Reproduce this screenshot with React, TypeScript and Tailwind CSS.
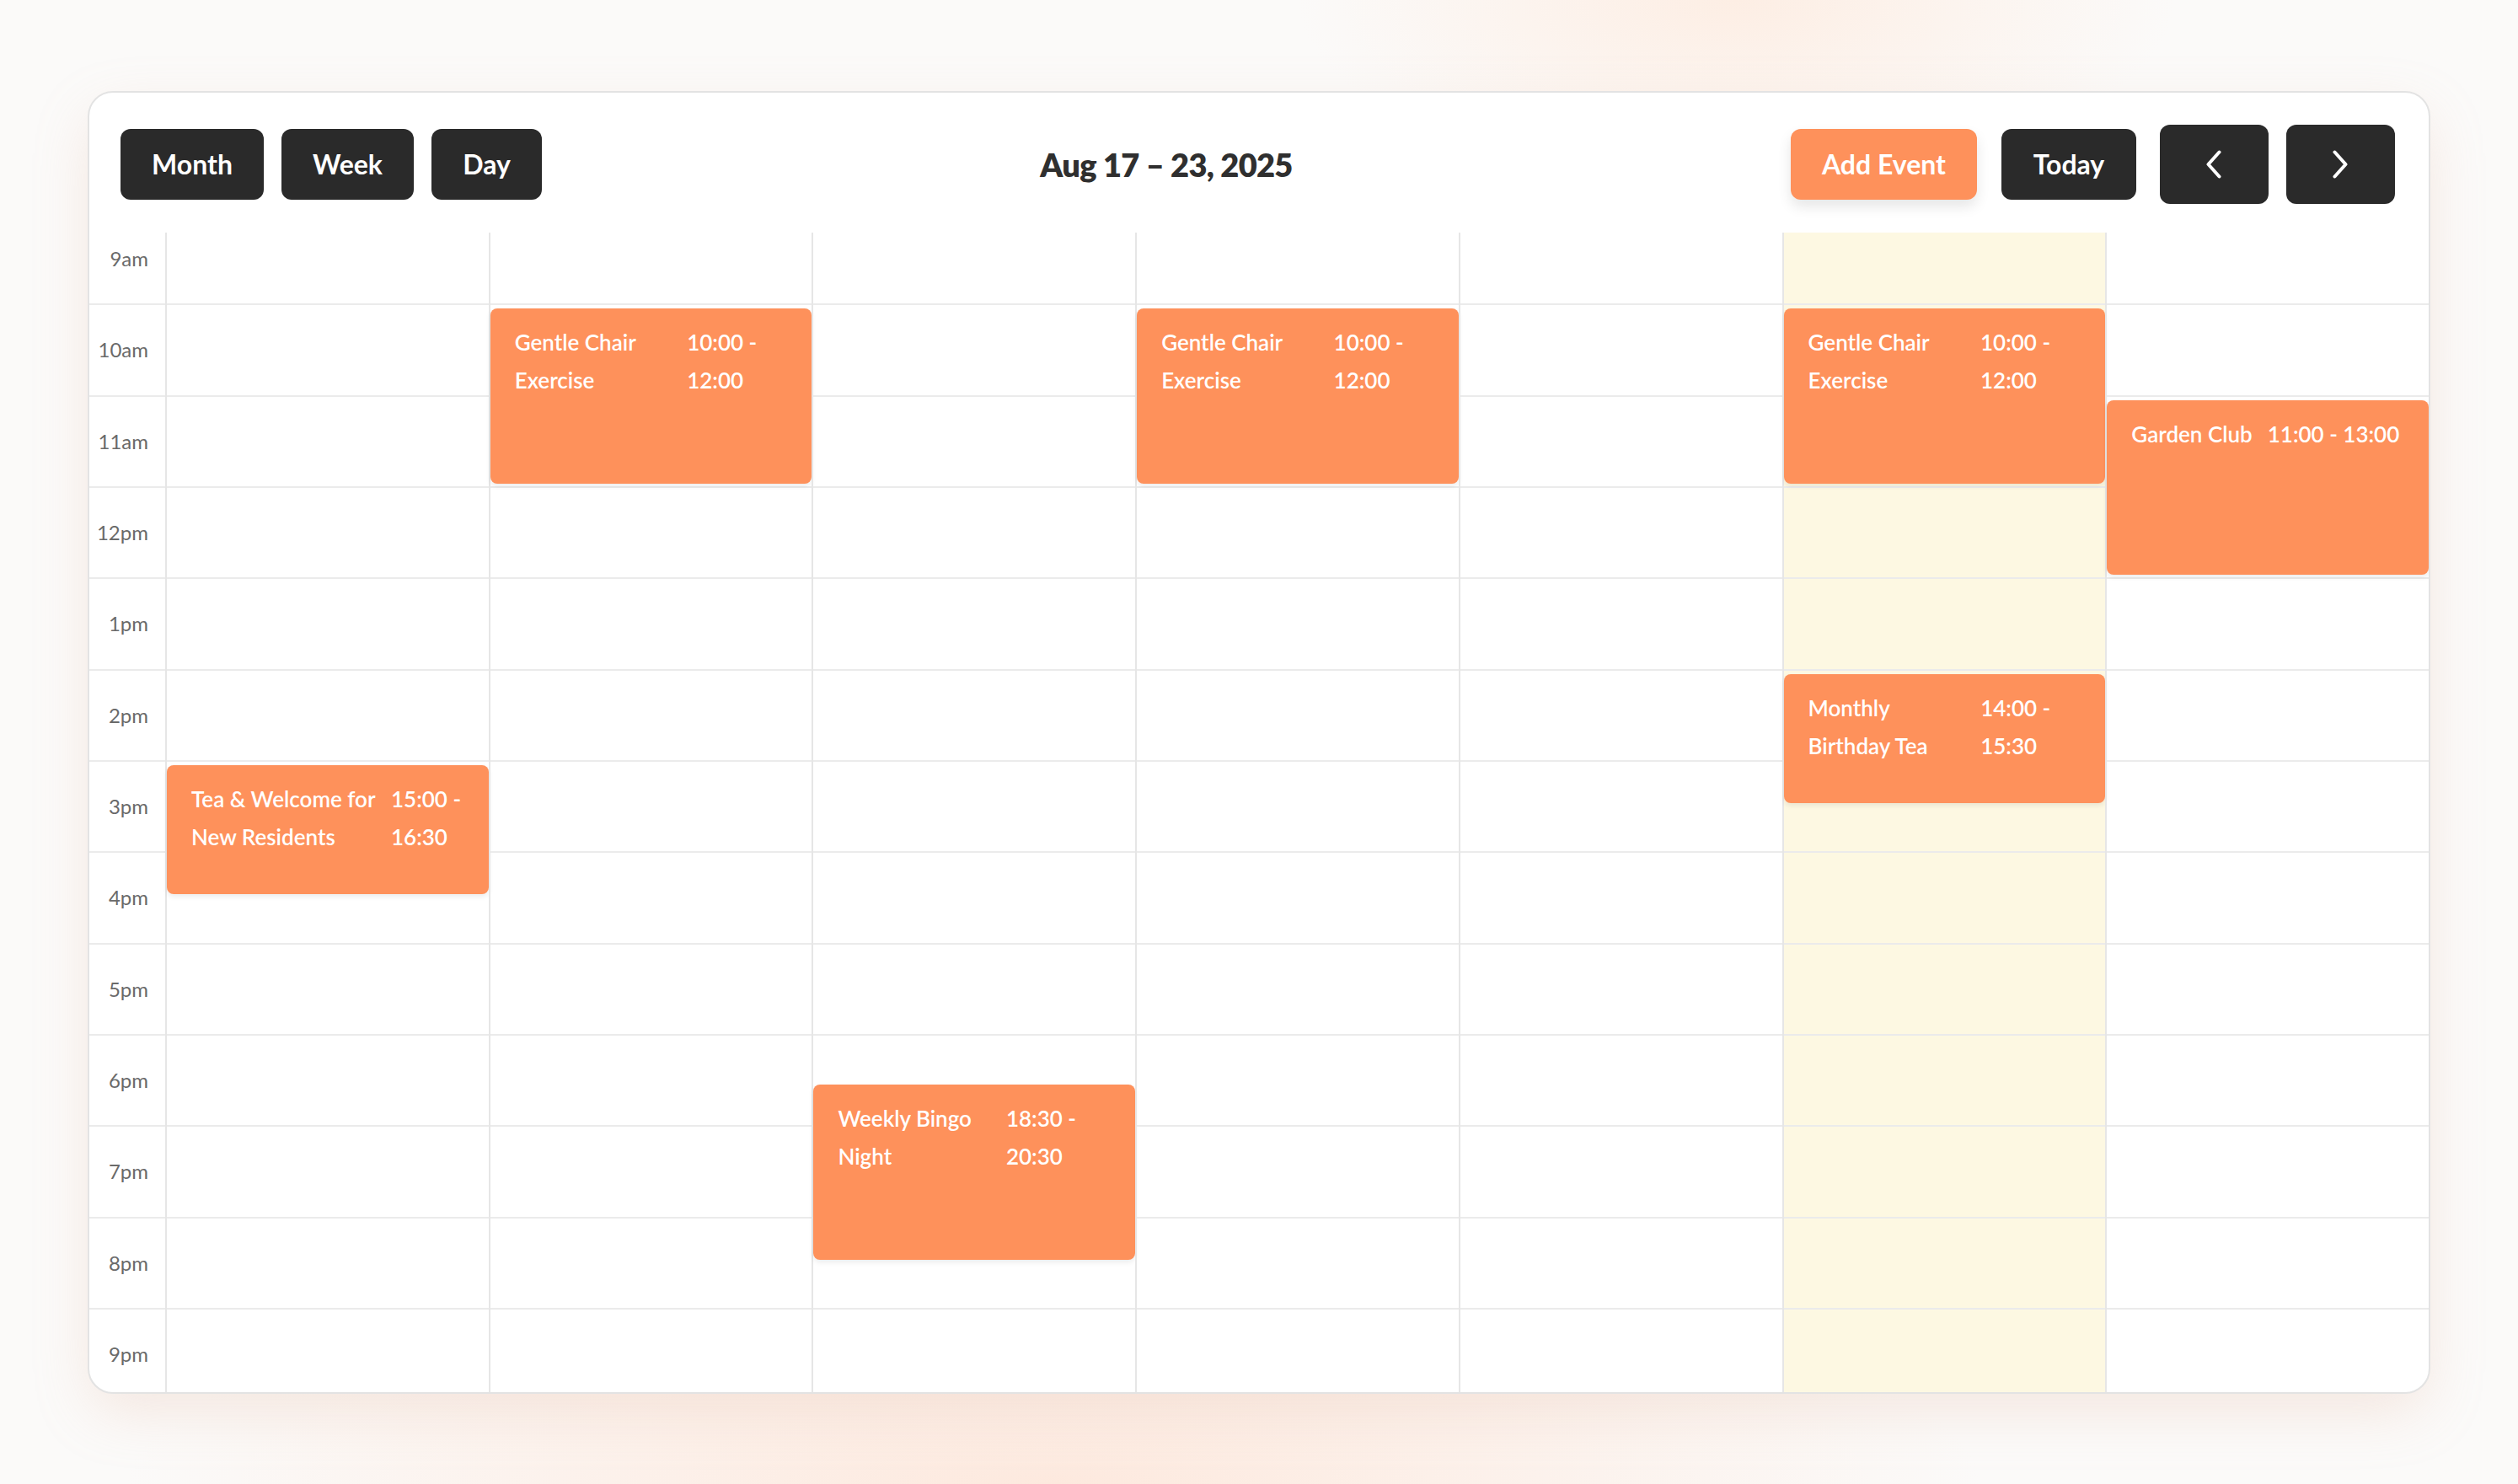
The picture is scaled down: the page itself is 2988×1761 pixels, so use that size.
import React from 'react';

const HOURS = ['9am', '10am', '11am', '12pm', '1pm', '2pm', '3pm', '4pm', '5pm', '6pm', '7pm', '8pm', '9pm'];
const ROW = 108.33;

type Ev = { day: number; start: number; end: number; title: string; time: string };

const EVENTS: Ev[] = [
  { day: 0, start: 15, end: 16.5, title: 'Tea & Welcome for New Residents', time: '15:00 - 16:30' },
  { day: 1, start: 10, end: 12, title: 'Gentle Chair Exercise', time: '10:00 - 12:00' },
  { day: 2, start: 18.5, end: 20.5, title: 'Weekly Bingo Night', time: '18:30 - 20:30' },
  { day: 3, start: 10, end: 12, title: 'Gentle Chair Exercise', time: '10:00 - 12:00' },
  { day: 5, start: 10, end: 12, title: 'Gentle Chair Exercise', time: '10:00 - 12:00' },
  { day: 5, start: 14, end: 15.5, title: 'Monthly Birthday Tea', time: '14:00 - 15:30' },
  { day: 6, start: 11, end: 13, title: 'Garden Club', time: '11:00 - 13:00' },
];

function Chevron({ dir }: { dir: 'left' | 'right' }) {
  return (
    <svg width="20" height="34" viewBox="0 0 20 34" fill="none" stroke="white" strokeWidth="4" strokeLinecap="round" strokeLinejoin="round">
      <polyline points={dir === 'left' ? '16.5,2.5 3.5,17 16.5,31.5' : '3.5,2.5 16.5,17 3.5,31.5'} />
    </svg>
  );
}

export default function App() {
  const days = [0, 1, 2, 3, 4, 5, 6];
  return (
    <div className="w-full h-[1761px] bg-[#fbfaf9] bg-[radial-gradient(ellipse_520px_220px_at_2060px_0px,#fdeee4,transparent),radial-gradient(ellipse_1100px_260px_at_1250px_1761px,#fde9de,transparent)] px-[104px] pt-[108px] pb-[107px] [font-family:Lato,'Noto_Sans',sans-serif]">
      <div className="h-full flex flex-col bg-white border-2 border-[#e3e3e3] rounded-[30px] overflow-hidden shadow-[0_24px_70px_-8px_rgba(225,175,150,0.28)]">
        <header className="flex items-center justify-between pl-[37px] pr-[40px] pt-[38px] pb-[34px]">
          <div className="flex items-center gap-[21px]">
            <button className="w-[170px] h-[84px] rounded-[12px] bg-[#2a2a2a] text-white text-[32px] font-bold">Month</button>
            <button className="w-[157px] h-[84px] rounded-[12px] bg-[#2a2a2a] text-white text-[32px] font-bold">Week</button>
            <button className="w-[131px] h-[84px] rounded-[12px] bg-[#2a2a2a] text-white text-[32px] font-bold">Day</button>
          </div>
          <h1 className="text-[38px] font-extrabold text-[#2f2f2f] tracking-[-0.7px]">Aug 17 – 23, 2025</h1>
          <div className="flex items-center">
            <button className="w-[221px] h-[84px] rounded-[12px] bg-[#fe915b] text-white text-[32px] font-bold shadow-[0_8px_16px_rgba(0,0,0,0.10)]">Add Event</button>
            <button className="ml-[29px] w-[160px] h-[84px] rounded-[12px] bg-[#2a2a2a] text-white text-[32px] font-bold">Today</button>
            <button className="ml-[28px] w-[129px] h-[94px] rounded-[12px] bg-[#2a2a2a] flex items-center justify-center">
              <Chevron dir="left" />
            </button>
            <button className="ml-[21px] w-[129px] h-[94px] rounded-[12px] bg-[#2a2a2a] flex items-center justify-center">
              <Chevron dir="right" />
            </button>
          </div>
        </header>
        <div className="flex-1 overflow-hidden">
          <div className="-mt-[22px] grid grid-cols-[90px_repeat(7,minmax(0,1fr))]">
            <div>
              {HOURS.map((h) => (
                <div key={h} className="h-[108.33px] border-b-2 border-[#ebebeb] flex items-center justify-end pr-[20px] text-[24px] font-normal text-[#6a6a6a]">
                  {h}
                </div>
              ))}
            </div>
            {days.map((d) => (
              <div key={d} className={d === 5 ? 'relative border-l-2 border-[#e6e6e6] bg-[#fdf8e2]' : 'relative border-l-2 border-[#e6e6e6]'}>
                {HOURS.map((h) => (
                  <div key={h} className="h-[108.33px] border-b-2 border-[#ebebeb]" />
                ))}
                {EVENTS.filter((e) => e.day === d).map((e, i) => (
                  <div
                    key={i}
                    className="absolute left-0 right-0 rounded-[8px] bg-[#fe915b] shadow-[0_3px_6px_rgba(0,0,0,0.08)] px-[29px] pt-[18px] text-white text-[26px] leading-[45px] font-semibold flex gap-[18px]"
                    style={{ top: (e.start - 9) * ROW + 4, height: (e.end - e.start) * ROW - 9 }}
                  >
                    <div>{e.title}</div>
                    <div>{e.time}</div>
                  </div>
                ))}
              </div>
            ))}
          </div>
        </div>
      </div>
    </div>
  );
}
